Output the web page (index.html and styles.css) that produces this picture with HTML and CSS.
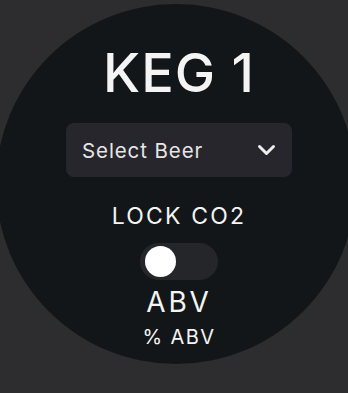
FILE: index.html
```html
<!DOCTYPE html>
<html lang="en">
<head>
  <meta charset="utf-8">
  <title>Keg 1</title>
  <link rel="stylesheet" href="styles.css">
</head>
<body>

  <div class="keg-dial">
    <h1 class="keg-title">KEG 1</h1>

    <div class="beer-select">
      <span>Select Beer</span>
      <svg class="chevron" width="19" height="12" viewBox="0 0 19 12">
        <polyline points="2.5,2.5 9.5,9.5 16.5,2.5" fill="none" stroke="#eeeeee" stroke-width="3" stroke-linecap="round" stroke-linejoin="round"/>
      </svg>
    </div>

    <div class="lock-label">LOCK CO2</div>
    <div class="toggle">
      <div class="toggle-knob"></div>
    </div>

    <div class="abv-label">ABV</div>
    <div class="abv-value">% ABV</div>
  </div>

</body>
</html>
```

FILE: styles.css
```css
html, body {
  margin: 0;
  height: 393px;
  overflow: hidden;
}
body {
  background-color: #2d2d2f;
  font-family: Inter, 'Noto Sans', sans-serif;
  color: #f4f4f4;
  display: flex;
  justify-content: center;
  align-items: flex-start;
}
.keg-dial {
  flex: none;
  width: 360px;
  height: 360px;
  margin: 4px 0 0 4px;
  border-radius: 50%;
  background-color: #131619;
  display: flex;
  flex-direction: column;
  align-items: center;
  box-sizing: border-box;
  padding: 41px 0 0 6px;
}
.keg-title {
  margin: 0;
  font-size: 54px;
  font-weight: 500;
  line-height: 56px;
  letter-spacing: 1px;
}
.beer-select {
  margin-top: 22px;
  width: 226px;
  height: 54px;
  box-sizing: border-box;
  border-radius: 8px;
  background-color: #27262c;
  display: flex;
  align-items: center;
  justify-content: space-between;
  padding: 0 16px 0 16px;
  font-size: 20.5px;
  letter-spacing: 0.9px;
  color: #e6e6e6;
}
.chevron {
  display: block;
}
.lock-label {
  margin-top: 27px;
  font-size: 23px;
  line-height: 24px;
  letter-spacing: 2.2px;
}
.toggle {
  margin-top: 15px;
  width: 78px;
  height: 37px;
  border-radius: 18.5px;
  background-color: #25262a;
  display: flex;
  align-items: center;
  padding-left: 5px;
  box-sizing: border-box;
}
.toggle-knob {
  width: 31px;
  height: 31px;
  border-radius: 50%;
  background-color: #ffffff;
}
.abv-label {
  margin-top: 6px;
  font-size: 28px;
  line-height: 32px;
  letter-spacing: 2.8px;
}
.abv-value {
  margin-top: 8px;
  font-size: 20px;
  line-height: 22px;
  letter-spacing: 1.4px;
}
```
